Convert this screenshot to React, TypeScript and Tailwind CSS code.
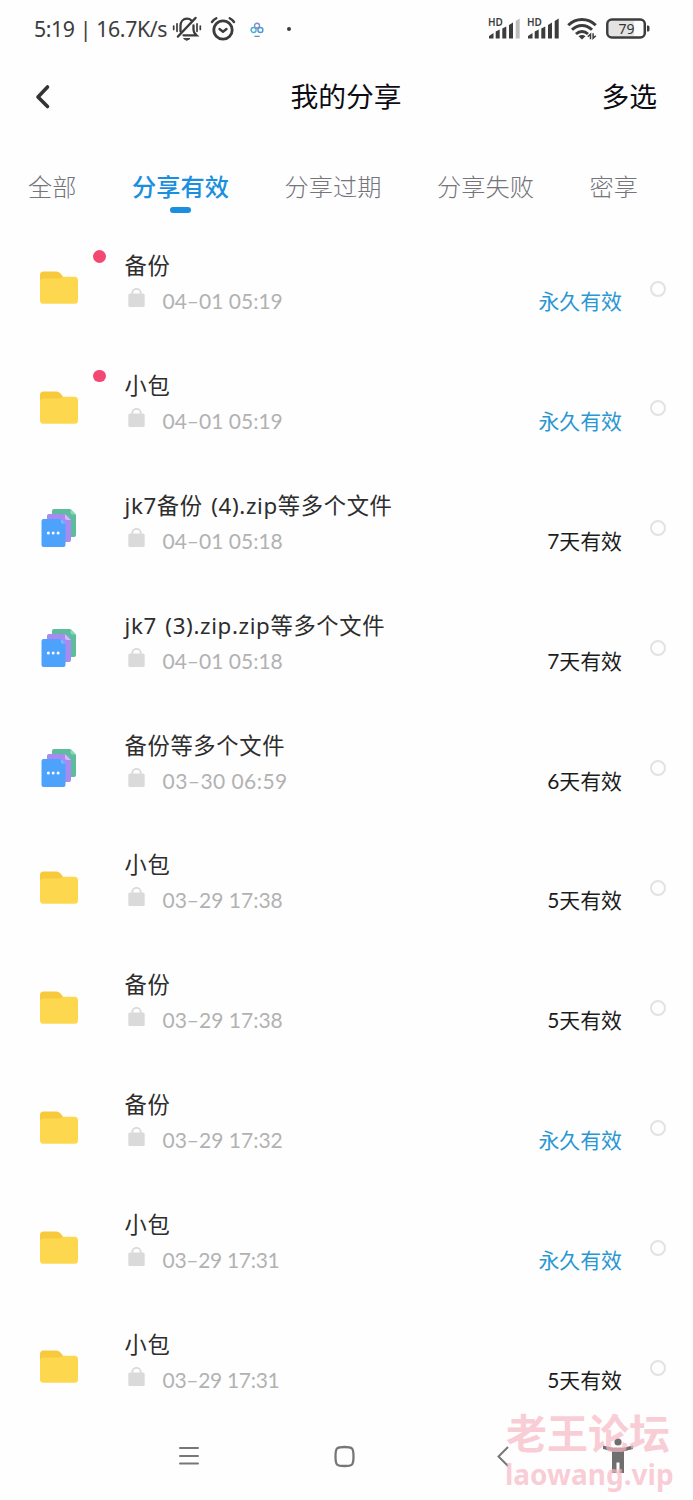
type Share = {
  name: string;
  time: string;
  validity: string;
  kind: 'folder' | 'files';
  permanent?: boolean;
  unread?: boolean;
};

const shares: Share[] = [
  { name: '备份', time: '04–01 05:19', validity: '永久有效', kind: 'folder', permanent: true, unread: true },
  { name: '小包', time: '04–01 05:19', validity: '永久有效', kind: 'folder', permanent: true, unread: true },
  { name: 'jk7备份 (4).zip等多个文件', time: '04–01 05:18', validity: '7天有效', kind: 'files' },
  { name: 'jk7 (3).zip.zip等多个文件', time: '04–01 05:18', validity: '7天有效', kind: 'files' },
  { name: '备份等多个文件', time: '03–30 06:59', validity: '6天有效', kind: 'files' },
  { name: '小包', time: '03–29 17:38', validity: '5天有效', kind: 'folder' },
  { name: '备份', time: '03–29 17:38', validity: '5天有效', kind: 'folder' },
  { name: '备份', time: '03–29 17:32', validity: '永久有效', kind: 'folder', permanent: true },
  { name: '小包', time: '03–29 17:31', validity: '永久有效', kind: 'folder', permanent: true },
  { name: '小包', time: '03–29 17:31', validity: '5天有效', kind: 'folder' },
];

const tabs = ['全部', '分享有效', '分享过期', '分享失败', '密享'];

function timeTracking(time: string) {
  if (time.endsWith('06:59')) return 'tracking-[0.45px]';
  if (time.endsWith('17:31')) return 'tracking-[-0.3px]';
  return 'tracking-normal';
}

function FolderIcon() {
  return (
    <svg width="38" height="33" viewBox="0 0 38 33">
      <path d="M0 4a3.500 3.500 0 0 1 3.500-3.500H16c2.500 0 3.700 1 5 2.600L24 7v10H0z" fill="#f7c93c" />
      <path d="M0 11C0 8.500 1.300 7.500 3.500 7.500H19c2 0 3-1.600 5-1.800h10.500A3.500 3.500 0 0 1 38 9.200v20a3.500 3.500 0 0 1-3.500 3.500h-31A3.500 3.500 0 0 1 0 29.200z" fill="#fdd84f" />
    </svg>
  );
}

function FilesIcon() {
  return (
    <svg width="36" height="40" viewBox="0 0 36 40">
      <path d="M13 1h16.500L35 6.500V27a2 2 0 0 1-2 2H13a2 2 0 0 1-2-2V3a2 2 0 0 1 2-2z" fill="#5cbc9c" />
      <path d="M29.500 1L35 6.500h-3.500a2 2 0 0 1-2-2z" fill="#8ed6bf" />
      <path d="M8 6h16.500L30 11.500V32a2 2 0 0 1-2 2H8a2 2 0 0 1-2-2V8a2 2 0 0 1 2-2z" fill="#a78bf0" />
      <path d="M24 6l6 6h-4a2 2 0 0 1-2-2z" fill="#cdbcfa" />
      <path d="M3 11h17l4.500 4.500V37a2 2 0 0 1-2 2h-20a2 2 0 0 1-2-2V13a2 2 0 0 1 2-2z" fill="#4da3fb" />
      <path d="M20 11l4.500 4.500h-3a1.500 1.500 0 0 1-1.500-1.500z" fill="#79bcff" />
      <g fill="#fff">
        <circle cx="7.300" cy="25" r="1.500" />
        <circle cx="12.200" cy="25" r="1.500" />
        <circle cx="17.100" cy="25" r="1.500" />
      </g>
    </svg>
  );
}

function LockIcon() {
  return (
    <svg className="mt-px" width="17" height="20" viewBox="0 0 17 20">
      <path d="M4.200 8V5.200a4.300 4.300 0 0 1 8.600 0V8" fill="none" stroke="#dadada" strokeWidth="1.900" />
      <rect x="0.300" y="5.500" width="16.400" height="13.500" rx="1.500" fill="#dadada" />
    </svg>
  );
}

function MutedBellIcon() {
  return (
    <svg width="30" height="26" viewBox="0 0 30 26" fill="none" stroke="#3c3c3c" strokeLinecap="round">
      <path d="M1.700 10v3.500M28.300 10v3.500M5 7.800v7.500M25 7.800v7.500" strokeWidth="1.700" />
      <path d="M8.500 15.500V10c0-4.200 2.700-7.300 6.500-7.300 1.800 0 3.300.6 4.500 1.800M21.500 9.500v4.500c0 2 1 3.500 3 5.300H11.500" strokeWidth="2.300" />
      <path d="M23.500 2L6 20.500" strokeWidth="2.500" />
      <path d="M12 22.600h6l-3 1.600z" fill="#3c3c3c" strokeWidth="1" />
    </svg>
  );
}

function AlarmIcon() {
  return (
    <svg width="26" height="26" viewBox="0 0 26 26" fill="none" stroke="#3c3c3c" strokeWidth="2.800" strokeLinecap="round" strokeLinejoin="round">
      <circle cx="13" cy="14" r="9.200" />
      <path d="M9.500 13l3.500 2.700 3.500-2.700" strokeWidth="2.400" />
      <path d="M2 6C3 4.500 4.500 3.200 6.300 2.300M24 6c-1-1.500-2.500-2.800-4.300-3.700" strokeWidth="2.400" />
    </svg>
  );
}

function CloudDiskIcon() {
  return (
    <svg width="14" height="16" viewBox="0 0 14 16" fill="none" strokeWidth="1.400">
      <circle cx="7" cy="3.700" r="2.500" stroke="#7f8fd0" />
      <circle cx="3.600" cy="8" r="2.500" stroke="#45afd8" />
      <circle cx="10.400" cy="8" r="2.500" stroke="#4a9ad6" />
      <circle cx="7" cy="6" r="1" fill="#d878a0" />
      <path d="M4.300 14.300h5.400" stroke="#627b96" strokeWidth="1.100" />
    </svg>
  );
}

function SignalIcon({ full }: { full?: boolean }) {
  return (
    <div className="flex h-6 w-8 flex-col">
      <span className="h-[10px] pt-px font-['Noto_Sans'] text-[10px] font-semibold leading-[9px] text-[#3c3c3c]">HD</span>
      <svg className="-mt-[9px]" width="32" height="23" viewBox="0 1 32 23" fill="#3c3c3c">
        <path d="M1 21.500v-2.500l4.500-3v5.500zM7.700 21.500v-7l4-2v9zM14.300 21.500v-10l4-2v12zM21 21.500V8l4-2.500v16z" />
        <path d="M27.700 21.500V4l4-2.500v20z" fill={full ? '#3c3c3c' : '#bdbdbd'} />
      </svg>
    </div>
  );
}

function WifiIcon() {
  return (
    <svg width="30" height="24" viewBox="0 0 30 24" fill="none" stroke="#3c3c3c" strokeWidth="3">
      <path d="M1.300 8.300C9 .4 21 .4 28.700 8.300M5 12.800c5.800-5.700 14.200-5.700 20 0M9 17c3.600-3.200 8.400-3.200 12 0" />
      <path d="M11.500 19.300c2-1.600 5-1.600 7 0L15 22.500z" fill="#3c3c3c" stroke="none" />
      <path d="M20.800 19.800l2.700-2.500v5M28.800 18.800l-2.700 2.500v-5" strokeWidth="1.500" />
    </svg>
  );
}

function BatteryIcon() {
  return (
    <svg width="45" height="22" viewBox="0 0 45 22">
      <rect x="3" y="3" width="25" height="15" fill="#e3e3e3" />
      <rect x="1.300" y="1.600" width="37.500" height="17.800" rx="4.500" fill="none" stroke="#3c3c3c" strokeWidth="2.500" />
      <path d="M41 7.500h1a1.500 1.500 0 0 1 1.500 1.500v3a1.500 1.500 0 0 1-1.500 1.500h-1z" fill="#3c3c3c" />
      <text x="20.500" y="15.600" textAnchor="middle" fontSize="14" fill="#333" className="font-['Noto_Sans']">79</text>
    </svg>
  );
}

function StatusBar() {
  return (
    <div className="flex h-[57px] items-center pl-[34px] pr-[42px] text-[#3c3c3c]">
      <span className="w-[138px] whitespace-nowrap font-['Noto_Sans'] text-[21.3px] leading-6 tracking-[-0.4px]">5:19 | 16.7K/s</span>
      <MutedBellIcon />
      <span className="ml-[8px]"><AlarmIcon /></span>
      <span className="ml-[14px] mt-[2px]"><CloudDiskIcon /></span>
      <span className="ml-[23px] size-1 rounded-full bg-[#3c3c3c]" />
      <div className="ml-auto flex items-center">
        <SignalIcon />
        <span className="ml-[7px]"><SignalIcon full /></span>
        <span className="ml-[8px]"><WifiIcon /></span>
        <span className="ml-[9px]"><BatteryIcon /></span>
      </div>
    </div>
  );
}

function ShareRow({ item }: { item: Share }) {
  return (
    <li className="flex h-[119.9px] items-start">
      <div className="relative flex h-full w-[124px] shrink-0 items-center pl-[39.5px]">
        {item.kind === 'folder' ? <FolderIcon /> : <span className="ml-[1.5px]"><FilesIcon /></span>}
        {item.unread && <span className="absolute left-[93px] top-[22px] size-[12.500px] rounded-full bg-[#f44771]" />}
      </div>
      <div className="min-w-0 flex-1 pt-[22px]">
        <div className="h-8 whitespace-nowrap pl-[0.5px] font-['Noto_Sans','Noto_Sans_CJK_SC',sans-serif] text-[22.3px] leading-8 tracking-[0.65px] text-[#2d2d2d] [word-spacing:2px]">{item.name}</div>
        <div className="mt-[5px] flex h-7 items-start pl-[3.5px]">
          <LockIcon />
          <span className={`ml-[18px] whitespace-nowrap text-[21px] leading-[27px] text-[#b2b2b2] ${timeTracking(item.time)}`}>{item.time}</span>
        </div>
      </div>
      <div className={item.permanent ? 'pt-[59px] text-[20.9px] leading-[27px] text-[#2a97d3]' : 'pt-[59px] text-[20.9px] leading-[27px] text-[#1c1c1c]'}>
        {item.validity}
      </div>
      <span className="ml-[28px] mr-[27px] mt-[52.500px] size-4 shrink-0 rounded-full border-2 border-[#e2e2e2]" />
    </li>
  );
}

export default function App() {
  return (
    <div className="relative flex h-[1500px] w-[693px] flex-col overflow-hidden bg-[#fefefe] font-[Lato,'Noto_Sans_CJK_SC',sans-serif]">
      <StatusBar />
      <header className="grid h-[80px] grid-cols-3 items-center pl-[35px] pr-[36px] text-[27.8px] leading-10 text-[#0c0c14]">
        <svg width="16" height="26" viewBox="0 0 16 26" fill="none" stroke="#333" strokeWidth="3.600" strokeLinecap="round" strokeLinejoin="round">
          <path d="M12.500 3L3 13l9.500 9.500" />
        </svg>
        <h1 className="text-center font-normal">我的分享</h1>
        <span className="text-right">多选</span>
      </header>
      <nav className="flex h-[91px] items-start justify-between pl-[28px] pr-[55px] pt-[32px] text-[24.2px] font-light leading-9 text-[#74747a]">
        {tabs.map((tab) =>
          tab === '分享有效' ? (
            <div key={tab} className="flex flex-col items-center font-medium text-[#1b8fdf]">
              {tab}
              <span className="mt-[2px] h-[6px] w-[21px] rounded-full bg-[#1b8fdf]" />
            </div>
          ) : (
            <span key={tab}>{tab}</span>
          ),
        )}
      </nav>
      <ul>
        {shares.map((item, i) => (
          <ShareRow key={i} item={item} />
        ))}
      </ul>
      <footer className="flex flex-1 items-start pl-[178px] pt-[18px]">
        <svg width="22" height="22" viewBox="0 0 22 22" stroke="#777" strokeWidth="2" strokeLinecap="round">
          <path d="M2 3h18M2 11h18M2 18.500h18" />
        </svg>
        <svg className="ml-[133px]" width="23" height="23" viewBox="0 0 23 23" fill="none" stroke="#777" strokeWidth="2.300">
          <path d="M11.500 2c8 0 9 1 9 9.500s-1 9.500-9 9.500-9-1-9-9.500 1-9.500 9-9.500z" />
        </svg>
        <svg className="ml-[140px]" width="16" height="24" viewBox="0 0 16 24" fill="none" stroke="#777" strokeWidth="2">
          <path d="M12 2L2.500 11.500 12 21" />
        </svg>
        <svg className="-mt-[9px] ml-[90px]" width="32" height="38" viewBox="0 0 32 38" fill="#6f6f6f">
          <circle cx="16" cy="6" r="3.600" />
          <path d="M1 9.500l10 2.200h10l10-2.200v3.500l-9 2.300V37h-4.500V26.500h-3V37H10V15.300L1 13z" />
        </svg>
      </footer>
      <div className="pointer-events-none absolute left-[506px] top-[1410px] whitespace-nowrap font-bold text-[#f8b8c4]/70">
        <div className="text-[41px] leading-[48px]">老王论坛</div>
        <div className="-ml-px font-['Noto_Sans'] text-[28px] leading-[32px]">laowang.vip</div>
      </div>
    </div>
  );
}
